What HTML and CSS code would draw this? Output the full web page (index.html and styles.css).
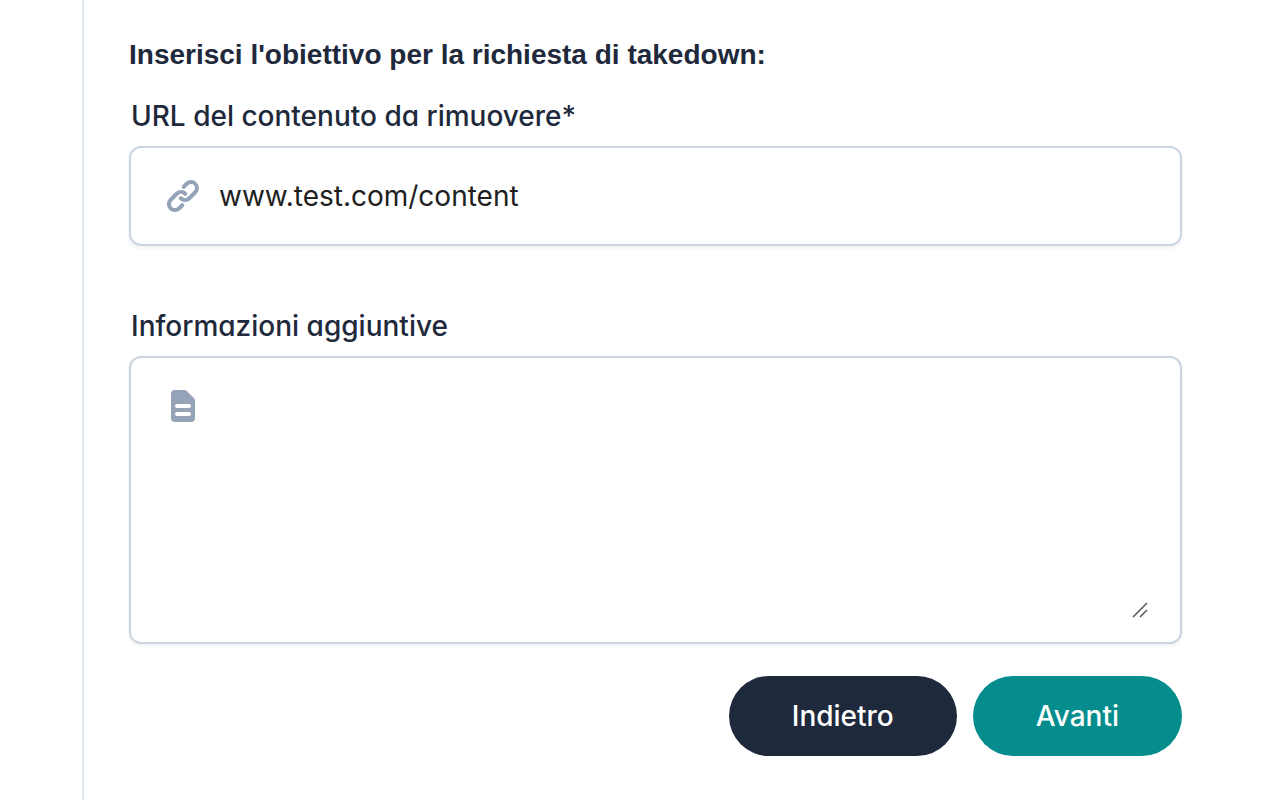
FILE: index.html
```html
<!DOCTYPE html>
<html lang="it">
<head>
<meta charset="utf-8">
<meta name="viewport" content="width=device-width, initial-scale=1">
<title>Richiesta di takedown</title>
<link rel="stylesheet" href="styles.css">
</head>
<body>
<main class="step">
  <form class="form">
    <h1 class="title">Inserisci l'obiettivo per la richiesta di takedown:</h1>
    <div class="group">
      <label class="label" for="url">URL del contenuto da rimuovere*</label>
      <div class="field">
        <svg class="icon" viewBox="0 0 20 20" fill="currentColor" aria-hidden="true">
          <path fill-rule="evenodd" d="M12.586 4.586a2 2 0 112.828 2.828l-3 3a2 2 0 01-2.828 0 1 1 0 00-1.414 1.414 4 4 0 005.656 0l3-3a4 4 0 00-5.656-5.656l-1.5 1.500a1 1 0 101.414 1.414l1.500-1.500zm-5 5a2 2 0 012.828 0 1 1 0 101.414-1.414 4 4 0 00-5.656 0l-3 3a4 4 0 105.656 5.656l1.500-1.500a1 1 0 10-1.414-1.414l-1.500 1.500a2 2 0 11-2.828-2.828l3-3z"/>
        </svg>
        <input class="input" id="url" type="text" value="www.test.com/content" required>
      </div>
    </div>
    <div class="group group-last">
      <label class="label" for="info">Informazioni aggiuntive</label>
      <div class="field field-area">
        <svg class="icon" viewBox="0 0 20 20" fill="currentColor" aria-hidden="true">
          <path fill-rule="evenodd" d="M4 4a2 2 0 012-2h4.586A2 2 0 0112 2.586L15.414 6A2 2 0 0116 7.414V16a2 2 0 01-2 2H6a2 2 0 01-2-2V4zm2 6a1 1 0 011-1h6a1 1 0 110 2H7a1 1 0 01-1-1zm1 3a1 1 0 100 2h6a1 1 0 100-2H7z"/>
        </svg>
        <textarea class="input area" id="info"></textarea>
        <svg class="grip" viewBox="0 0 16 16" stroke="currentColor" stroke-width="1.500" aria-hidden="true"><path d="M1 15L15 1M8 15l7-7"/></svg>
      </div>
    </div>
    <div class="actions">
      <button class="button back" type="button">Indietro</button>
      <button class="button next" type="submit">Avanti</button>
    </div>
  </form>
</main>
</body>
</html>
```
FILE: styles.css
```css
* { box-sizing: border-box; }
body {
  margin: 0;
  background: #fff;
  color: #1e293b;
  font-family: Inter, "Liberation Sans", sans-serif;
  font-size: 28px;
  line-height: 40px;
}
.step {
  min-height: 100vh;
  margin-left: 82px;
  border-left: 2px solid #dde5ed;
}
.form { padding: 35px 81px 44px 45px; }
.title {
  margin: 0 0 21px;
  font-family: "Liberation Sans", Arial, sans-serif;
  font-size: 28px;
  font-weight: 700;
  line-height: 40px;
}
.group { margin-bottom: 60px; }
.group-last { margin-bottom: 32px; }
.label {
  display: block;
  margin-bottom: 10px;
  padding-left: 2px;
  font-weight: 500;
  font-feature-settings: "cv11";
}
.field {
  position: relative;
  display: flex;
  align-items: center;
  gap: 16px;
  padding: 28px 32px;
  border: 2px solid #cbd5e1;
  border-radius: 12px;
  box-shadow: 0 2px 4px rgba(15, 23, 42, .06);
}
.field:focus-within { border-color: #048d8c; }
.icon { flex: none; width: 40px; height: 40px; color: #94a3b8; }
.input {
  flex: 1;
  min-width: 0;
  height: 40px;
  padding: 0;
  border: 0;
  outline: 0;
  background: transparent;
  color: #202020;
  font: inherit;
}
.field-area { align-items: flex-start; padding-bottom: 24px; }
.area { height: 232px; resize: vertical; }
.area::-webkit-resizer { background: transparent; }
.grip {
  position: absolute;
  right: 32px;
  bottom: 24px;
  width: 16px;
  height: 16px;
  color: #555;
  pointer-events: none;
}
.actions { display: flex; justify-content: flex-end; gap: 16px; }
.button {
  padding: 20px 63px;
  border: 0;
  border-radius: 40px;
  color: #fff;
  font: 500 28px/40px Inter, "Liberation Sans", sans-serif;
  cursor: pointer;
}
.back { background: #1e293b; }
.next { background: #048d8c; }
```
